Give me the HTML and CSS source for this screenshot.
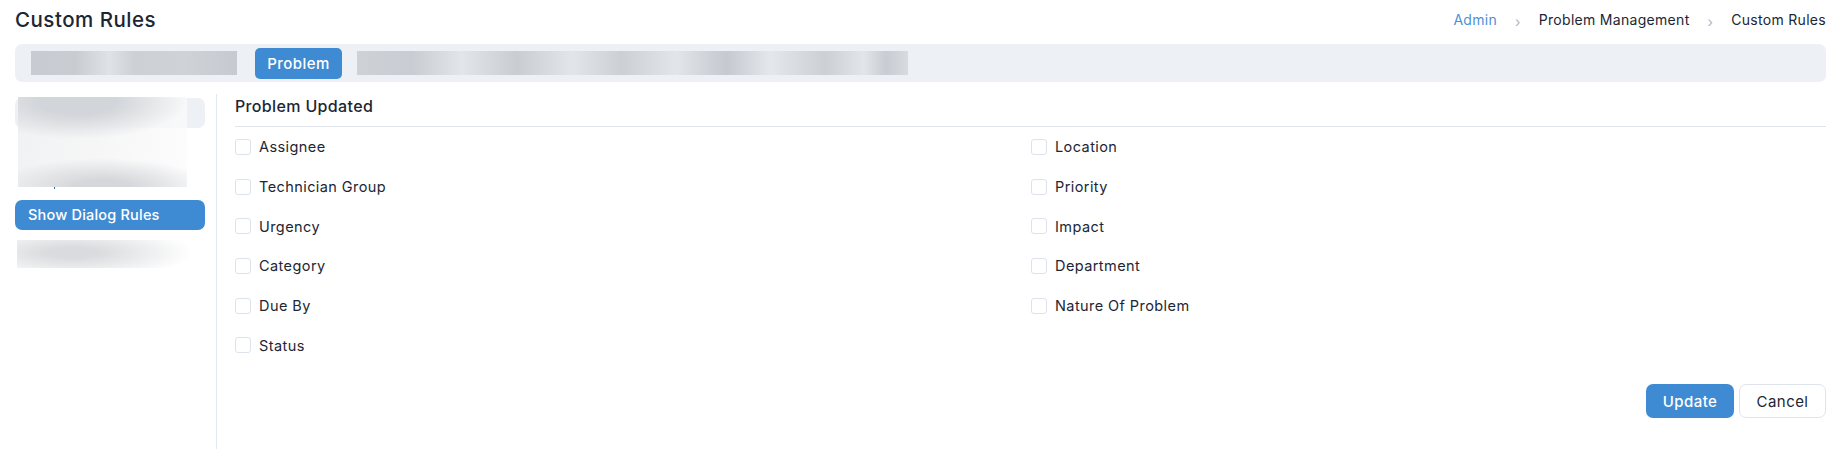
FILE: index.html
```html
<!DOCTYPE html>
<html lang="en">
<head>
  <meta charset="UTF-8">
  <title>Custom Rules</title>
  <link rel="stylesheet" href="styles.css">
</head>
<body>
  <header class="page-head">
    <h1>Custom Rules</h1>
    <nav class="crumbs">
      <a href="#">Admin</a>
      <span class="sep">&rsaquo;</span>
      <span>Problem Management</span>
      <span class="sep">&rsaquo;</span>
      <span>Custom Rules</span>
    </nav>
  </header>

  <div class="tabs">
    <div class="smudge smudge-left"></div>
    <button class="tab-active">Problem</button>
    <div class="smudge smudge-right"></div>
  </div>

  <div class="content">
    <aside class="side">
      <div class="side-item side-first"></div>
      <div class="side-hidden"><span class="side-mark"></span></div>
      <div class="side-item side-active">Show Dialog Rules</div>
      <div class="side-last"></div>
      <div class="side-cover"></div>
    </aside>

    <main class="panel">
      <h2>Problem Updated</h2>
      <div class="fields">
        <label class="field"><span class="box"></span>Assignee</label>
        <label class="field"><span class="box"></span>Location</label>
        <label class="field"><span class="box"></span>Technician Group</label>
        <label class="field"><span class="box"></span>Priority</label>
        <label class="field"><span class="box"></span>Urgency</label>
        <label class="field"><span class="box"></span>Impact</label>
        <label class="field"><span class="box"></span>Category</label>
        <label class="field"><span class="box"></span>Department</label>
        <label class="field"><span class="box"></span>Due By</label>
        <label class="field"><span class="box"></span>Nature Of Problem</label>
        <label class="field"><span class="box"></span>Status</label>
      </div>
      <div class="actions">
        <button class="btn btn-primary">Update</button>
        <button class="btn btn-plain">Cancel</button>
      </div>
    </main>
  </div>
</body>
</html>
```

FILE: styles.css
```css
* {
  margin: 0;
  padding: 0;
  box-sizing: border-box;
}

html, body {
  height: 449px;
  overflow: hidden;
}

body {
  font-family: 'Inter', 'Open Sans', sans-serif;
  font-size: 14.5px;
  letter-spacing: 0.42px;
  background-color: #ffffff;
  color: #1c2634;
  padding: 0 13px 0 15px;
}

.page-head {
  display: flex;
  justify-content: space-between;
  align-items: center;
  height: 44px;
  padding-bottom: 5px;
}

h1 {
  font-size: 20.5px;
  font-weight: 500;
  letter-spacing: 0.5px;
}

.crumbs {
  display: flex;
  align-items: center;
  gap: 18px;
  font-size: 14px;
  letter-spacing: 0.3px;
}

.crumbs a {
  color: #4f8fd6;
  text-decoration: none;
}

.crumbs .sep {
  color: #a9b6c8;
  font-size: 14px;
  padding-top: 3px;
}

.tabs {
  display: flex;
  align-items: center;
  height: 38px;
  padding-left: 16px;
  background-color: #edf0f5;
  border-radius: 7px;
}

.tab-active {
  width: 87px;
  height: 31px;
  margin: 0 15px 0 18px;
  color: #ffffff;
  font: inherit;
  font-size: 15px;
  letter-spacing: 0.45px;
  font-weight: 500;
  background-color: #3f8bd3;
  border: none;
  border-radius: 5px;
}

.smudge {
  height: 24px;
  background: #cdd1d7;
}

.smudge-left {
  width: 206px;
  background: linear-gradient(90deg, #c8ccd2 0%, #c9cdd2 22%, #dfe2e6 38%, #cdd1d5 50%, #cfd2d7 75%, #c6cad0 100%);
}

.smudge-right {
  width: 551px;
  background: linear-gradient(90deg, #ced1d6 0%, #c9cdd3 10%, #e2e5e9 19%, #c9cdd2 29%, #e2e5ea 39%, #ccd0d4 48%, #e2e5e9 58%, #c5c9d0 67%, #e4e7eb 75%, #ccd0d4 85%, #e2e5e9 92%, #c8ccd3 96%, #d8dbe0 100%);
}

.content {
  display: flex;
  height: 367px;
}

.side {
  position: relative;
  flex-shrink: 0;
  width: 202px;
  margin: 12px 18px 0 0;
  padding: 4px 11px 0 0;
  border-right: 1px solid #e3e7ee;
}

.side-item {
  height: 30px;
  border-radius: 7px;
}

.side-first {
  background-color: #edf0f5;
}

.side-hidden {
  position: relative;
  height: 72px;
}

.side-mark {
  position: absolute;
  left: 39px;
  top: 59px;
  width: 1px;
  height: 2px;
  background-color: #2c74bd;
}

.side-active {
  display: flex;
  align-items: center;
  padding: 0 0 2px 13px;
  color: #ffffff;
  font-weight: 500;
  letter-spacing: 0.2px;
  background-color: #3f8bd3;
}

.side-last {
  width: 173px;
  height: 28px;
  margin: 10px 0 0 2px;
  background: radial-gradient(ellipse 70% 95% at 32% 45%, #d9dbde 20%, #ffffff 100%);
}

.side-cover {
  position: absolute;
  left: 3px;
  top: 3px;
  width: 169px;
  height: 90px;
  background:
    radial-gradient(ellipse 65% 32% at 50% 100%, #d5d7da 25%, rgba(255, 255, 255, 0) 100%),
    radial-gradient(ellipse 65% 42% at 35% 5%, #d2d5d9 35%, rgba(255, 255, 255, 0) 100%),
    linear-gradient(100deg, rgba(240, 241, 242, 0.95) 0%, rgba(246, 246, 247, 0.9) 55%, rgba(252, 252, 253, 0.75) 100%);
}

.panel {
  position: relative;
  flex: 1;
  padding-top: 13px;
}

h2 {
  height: 32px;
  font-size: 16px;
  font-weight: 500;
  letter-spacing: 0.35px;
  line-height: 22px;
  border-bottom: 1px solid #dfe4ec;
}

.fields {
  display: grid;
  grid-template-columns: 796px 1fr;
  grid-auto-rows: 39.7px;
}

.field {
  display: flex;
  align-items: center;
  gap: 8px;
}

.box {
  width: 16px;
  height: 16px;
  background-color: #ffffff;
  border: 1px solid #dde3ec;
  border-radius: 3px;
}

.actions {
  display: flex;
  justify-content: flex-end;
  gap: 5px;
  margin-top: 19px;
}

.btn {
  width: 87px;
  height: 34px;
  font: inherit;
  font-size: 15px;
  letter-spacing: 0.45px;
  border-radius: 7px;
}

.btn-primary {
  width: 88px;
  color: #ffffff;
  font-weight: 500;
  background-color: #3f8bd3;
  border: none;
}

.btn-plain {
  color: #1c2634;
  background-color: #ffffff;
  border: 1px solid #dfe4ec;
}
```
